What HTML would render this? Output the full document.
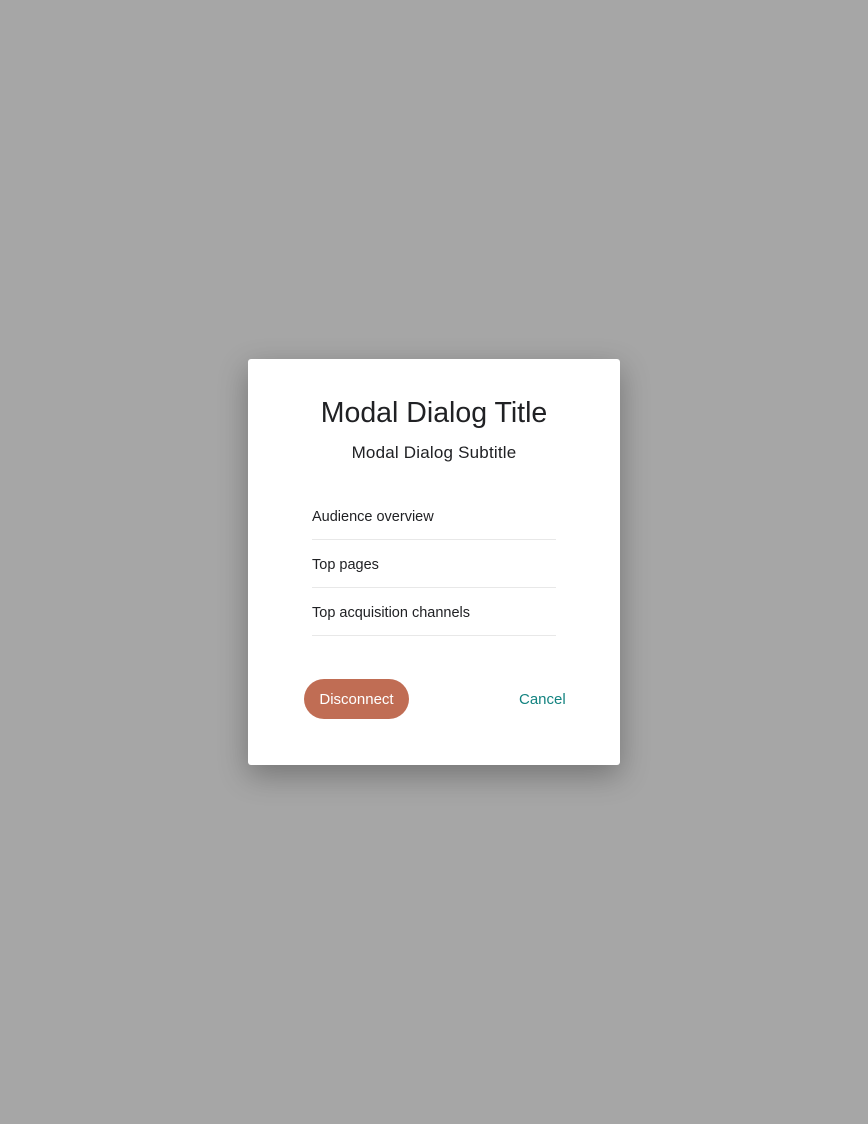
<!DOCTYPE html>
<html><head><style>
body{margin:0;width:868px;height:1124px;background:#a6a6a6;font-family:"Liberation Sans",sans-serif;position:relative;overflow:hidden}
.d{position:absolute;left:248px;top:359px;width:372px;height:406px;background:#fff;border-radius:3px;box-shadow:0 10px 30px rgba(0,0,0,.3)}
.t{position:absolute;top:397px;left:248px;width:372px;text-align:center;font-size:28.5px;color:#202124}
.s{position:absolute;top:443px;left:248px;width:372px;text-align:center;font-size:17px;color:#202124;letter-spacing:.2px}
.i{position:absolute;left:312px;width:244px;height:47px;border-bottom:1px solid #e8e8e8;font-size:14.5px;color:#202124;letter-spacing:0}
.i span{position:relative;top:2px}
.b{position:absolute;left:304px;top:679px;width:105px;height:40px;border-radius:20px;background:#c06d54;color:#fff;font-size:15px;text-align:center;line-height:42px}
.c{position:absolute;left:519px;top:679px;line-height:42px;font-size:15px;color:#138380}
</style></head><body>
<div class="d"></div>
<div class="t">Modal Dialog Title</div>
<div class="s">Modal Dialog Subtitle</div>
<div class="i" style="top:492px;line-height:47px"><span>Audience overview</span></div>
<div class="i" style="top:540px;line-height:47px"><span>Top pages</span></div>
<div class="i" style="top:588px;line-height:47px"><span>Top acquisition channels</span></div>
<div class="b">Disconnect</div>
<div class="c">Cancel</div>
</body></html>
